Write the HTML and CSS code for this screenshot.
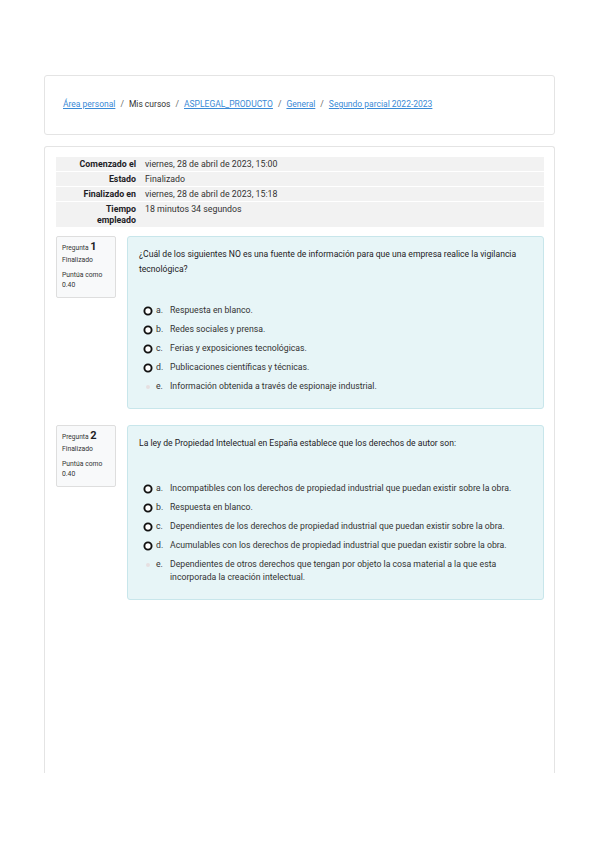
FILE: index.html
```html
<!DOCTYPE html>
<html lang="es">
<head>
<meta charset="utf-8">
<title>Revisión del intento</title>
<link rel="stylesheet" href="styles.css">
</head>
<body>
<div class="page">
  <div class="card header">
    <nav class="breadcrumb">
      <a href="#">Área personal</a><span class="sep">/</span><span>Mis cursos</span><span class="sep">/</span><a href="#">ASPLEGAL_PRODUCTO</a><span class="sep">/</span><a href="#">General</a><span class="sep">/</span><a href="#">Segundo parcial 2022-2023</a>
    </nav>
  </div>
  <div class="card main">
    <table class="summary">
      <tr><th>Comenzado el</th><td>viernes, 28 de abril de 2023, 15:00</td></tr>
      <tr><th>Estado</th><td>Finalizado</td></tr>
      <tr><th>Finalizado en</th><td>viernes, 28 de abril de 2023, 15:18</td></tr>
      <tr><th>Tiempo<br>empleado</th><td>18 minutos 34 segundos</td></tr>
    </table>

    <div class="que">
      <div class="info">
        <div class="qno"><span class="qlabel">Pregunta</span> <span class="qnum">1</span></div>
        <div class="state">Finalizado</div>
        <div class="grade">Puntúa como<br>0.40</div>
      </div>
      <div class="content">
        <div class="qtext">¿Cuál de los siguientes NO es una fuente de información para que una empresa realice la vigilancia tecnológica?</div>
        <div class="answers">
          <div class="opt"><span class="radio"><svg viewBox="0 0 10 10" width="10" height="10"><circle cx="5" cy="5" r="3.6" fill="#fff" stroke="#111" stroke-width="1.9"/></svg></span><span class="letter">a.</span><span class="otext">Respuesta en blanco.</span></div>
          <div class="opt"><span class="radio"><svg viewBox="0 0 10 10" width="10" height="10"><circle cx="5" cy="5" r="3.6" fill="#fff" stroke="#111" stroke-width="1.9"/></svg></span><span class="letter">b.</span><span class="otext">Redes sociales y prensa.</span></div>
          <div class="opt"><span class="radio"><svg viewBox="0 0 10 10" width="10" height="10"><circle cx="5" cy="5" r="3.6" fill="#fff" stroke="#111" stroke-width="1.9"/></svg></span><span class="letter">c.</span><span class="otext">Ferias y exposiciones tecnológicas.</span></div>
          <div class="opt"><span class="radio"><svg viewBox="0 0 10 10" width="10" height="10"><circle cx="5" cy="5" r="3.6" fill="#fff" stroke="#111" stroke-width="1.9"/></svg></span><span class="letter">d.</span><span class="otext">Publicaciones científicas y técnicas.</span></div>
          <div class="opt"><span class="radio"><svg viewBox="0 0 10 10" width="10" height="10"><circle cx="5" cy="5" r="2" fill="#e6dfe1"/></svg></span><span class="letter">e.</span><span class="otext">Información obtenida a través de espionaje industrial.</span></div>
        </div>
      </div>
    </div>

    <div class="que">
      <div class="info">
        <div class="qno"><span class="qlabel">Pregunta</span> <span class="qnum">2</span></div>
        <div class="state">Finalizado</div>
        <div class="grade">Puntúa como<br>0.40</div>
      </div>
      <div class="content">
        <div class="qtext qtext-short">La ley de Propiedad Intelectual en España establece que los derechos de autor son:</div>
        <div class="answers">
          <div class="opt"><span class="radio"><svg viewBox="0 0 10 10" width="10" height="10"><circle cx="5" cy="5" r="3.6" fill="#fff" stroke="#111" stroke-width="1.9"/></svg></span><span class="letter">a.</span><span class="otext">Incompatibles con los derechos de propiedad industrial que puedan existir sobre la obra.</span></div>
          <div class="opt"><span class="radio"><svg viewBox="0 0 10 10" width="10" height="10"><circle cx="5" cy="5" r="3.6" fill="#fff" stroke="#111" stroke-width="1.9"/></svg></span><span class="letter">b.</span><span class="otext">Respuesta en blanco.</span></div>
          <div class="opt"><span class="radio"><svg viewBox="0 0 10 10" width="10" height="10"><circle cx="5" cy="5" r="3.6" fill="#fff" stroke="#111" stroke-width="1.9"/></svg></span><span class="letter">c.</span><span class="otext">Dependientes de los derechos de propiedad industrial que puedan existir sobre la obra.</span></div>
          <div class="opt"><span class="radio"><svg viewBox="0 0 10 10" width="10" height="10"><circle cx="5" cy="5" r="3.6" fill="#fff" stroke="#111" stroke-width="1.9"/></svg></span><span class="letter">d.</span><span class="otext">Acumulables con los derechos de propiedad industrial que puedan existir sobre la obra.</span></div>
          <div class="opt"><span class="radio"><svg viewBox="0 0 10 10" width="10" height="10"><circle cx="5" cy="5" r="2" fill="#e6dfe1"/></svg></span><span class="letter">e.</span><span class="otext">Dependientes de otros derechos que tengan por objeto la cosa material a la que esta incorporada la creación intelectual.</span></div>
        </div>
      </div>
    </div>
  </div>
</div>
</body>
</html>
```

FILE: styles.css
```css
html, body {
  margin: 0;
  padding: 0;
  background: #fff;
}
body {
  font-family: Roboto, "Liberation Sans", Arial, sans-serif;
  color: #1d2125;
  font-size: 8.6px;
}
.page {
  padding: 75px 0 0 44px;
  width: 511px;
}
.card {
  border: 1px solid #e4e4e4;
  border-radius: 3px;
  background: #fff;
  box-sizing: border-box;
}
.header {
  height: 60px;
  padding: 22px 18px 0 18px;
}
.breadcrumb {
  font-size: 8.5px;
  line-height: 12px;
  color: #333;
  white-space: nowrap;
}
.breadcrumb a {
  color: #3a8ad6;
  text-decoration: underline;
}
.breadcrumb .sep {
  color: #666;
  margin: 0 5px;
}
.main {
  margin-top: 11px;
  height: 627px;
  border-bottom: none;
  border-radius: 3px 3px 0 0;
  padding: 10px 10px 0 11px;
}
.summary {
  width: 488px;
  border-collapse: collapse;
  font-size: 8.8px;
  line-height: 11px;
  margin-bottom: 9px;
}
.summary tr {
  background: #f2f2f2;
  border-bottom: 1px solid #fff;
}
.summary tr:last-child {
  border-bottom: none;
}
.summary th {
  width: 80px;
  text-align: right;
  font-weight: 700;
  padding: 2px 4px 1px 0;
  vertical-align: top;
}
.summary td {
  padding: 2px 4px 1px 5px;
  vertical-align: top;
  color: #333;
}
.que {
  display: flex;
  align-items: flex-start;
  gap: 11px;
  margin-bottom: 16px;
}
.info {
  width: 60px;
  box-sizing: border-box;
  border: 1px solid #dedede;
  border-radius: 2px;
  background: #f8f9fa;
  padding: 4px 3px 7px 5px;
  font-size: 6.8px;
  color: #333;
}
.qno {
  line-height: 12px;
}
.qlabel {
  font-size: 6.6px;
}
.qnum {
  font-size: 11px;
  font-weight: 700;
  color: #1d2125;
}
.state {
  line-height: 12px;
}
.grade {
  margin-top: 5px;
  line-height: 9.5px;
}
.content {
  flex: 1;
  box-sizing: border-box;
  border: 1px solid #c8e6eb;
  border-radius: 3px;
  background: #e7f5f7;
  padding: 10px 11px 12px 11px;
}
.qtext {
  line-height: 15px;
  font-size: 8.6px;
  margin-bottom: 24px;
}
.qtext-short {
  margin-bottom: 28px;
}
.opt {
  display: flex;
  align-items: flex-start;
  padding: 3px 0 3px 4px;
  line-height: 13px;
  font-size: 8.7px;
  color: #333;
}
.radio {
  width: 10px;
  height: 13px;
  display: flex;
  align-items: center;
  margin-right: 3px;
  flex: none;
}
.radio svg {
  display: block;
}
.letter {
  width: 14px;
  flex: none;
}
.otext {
  flex: 1;
}
```
